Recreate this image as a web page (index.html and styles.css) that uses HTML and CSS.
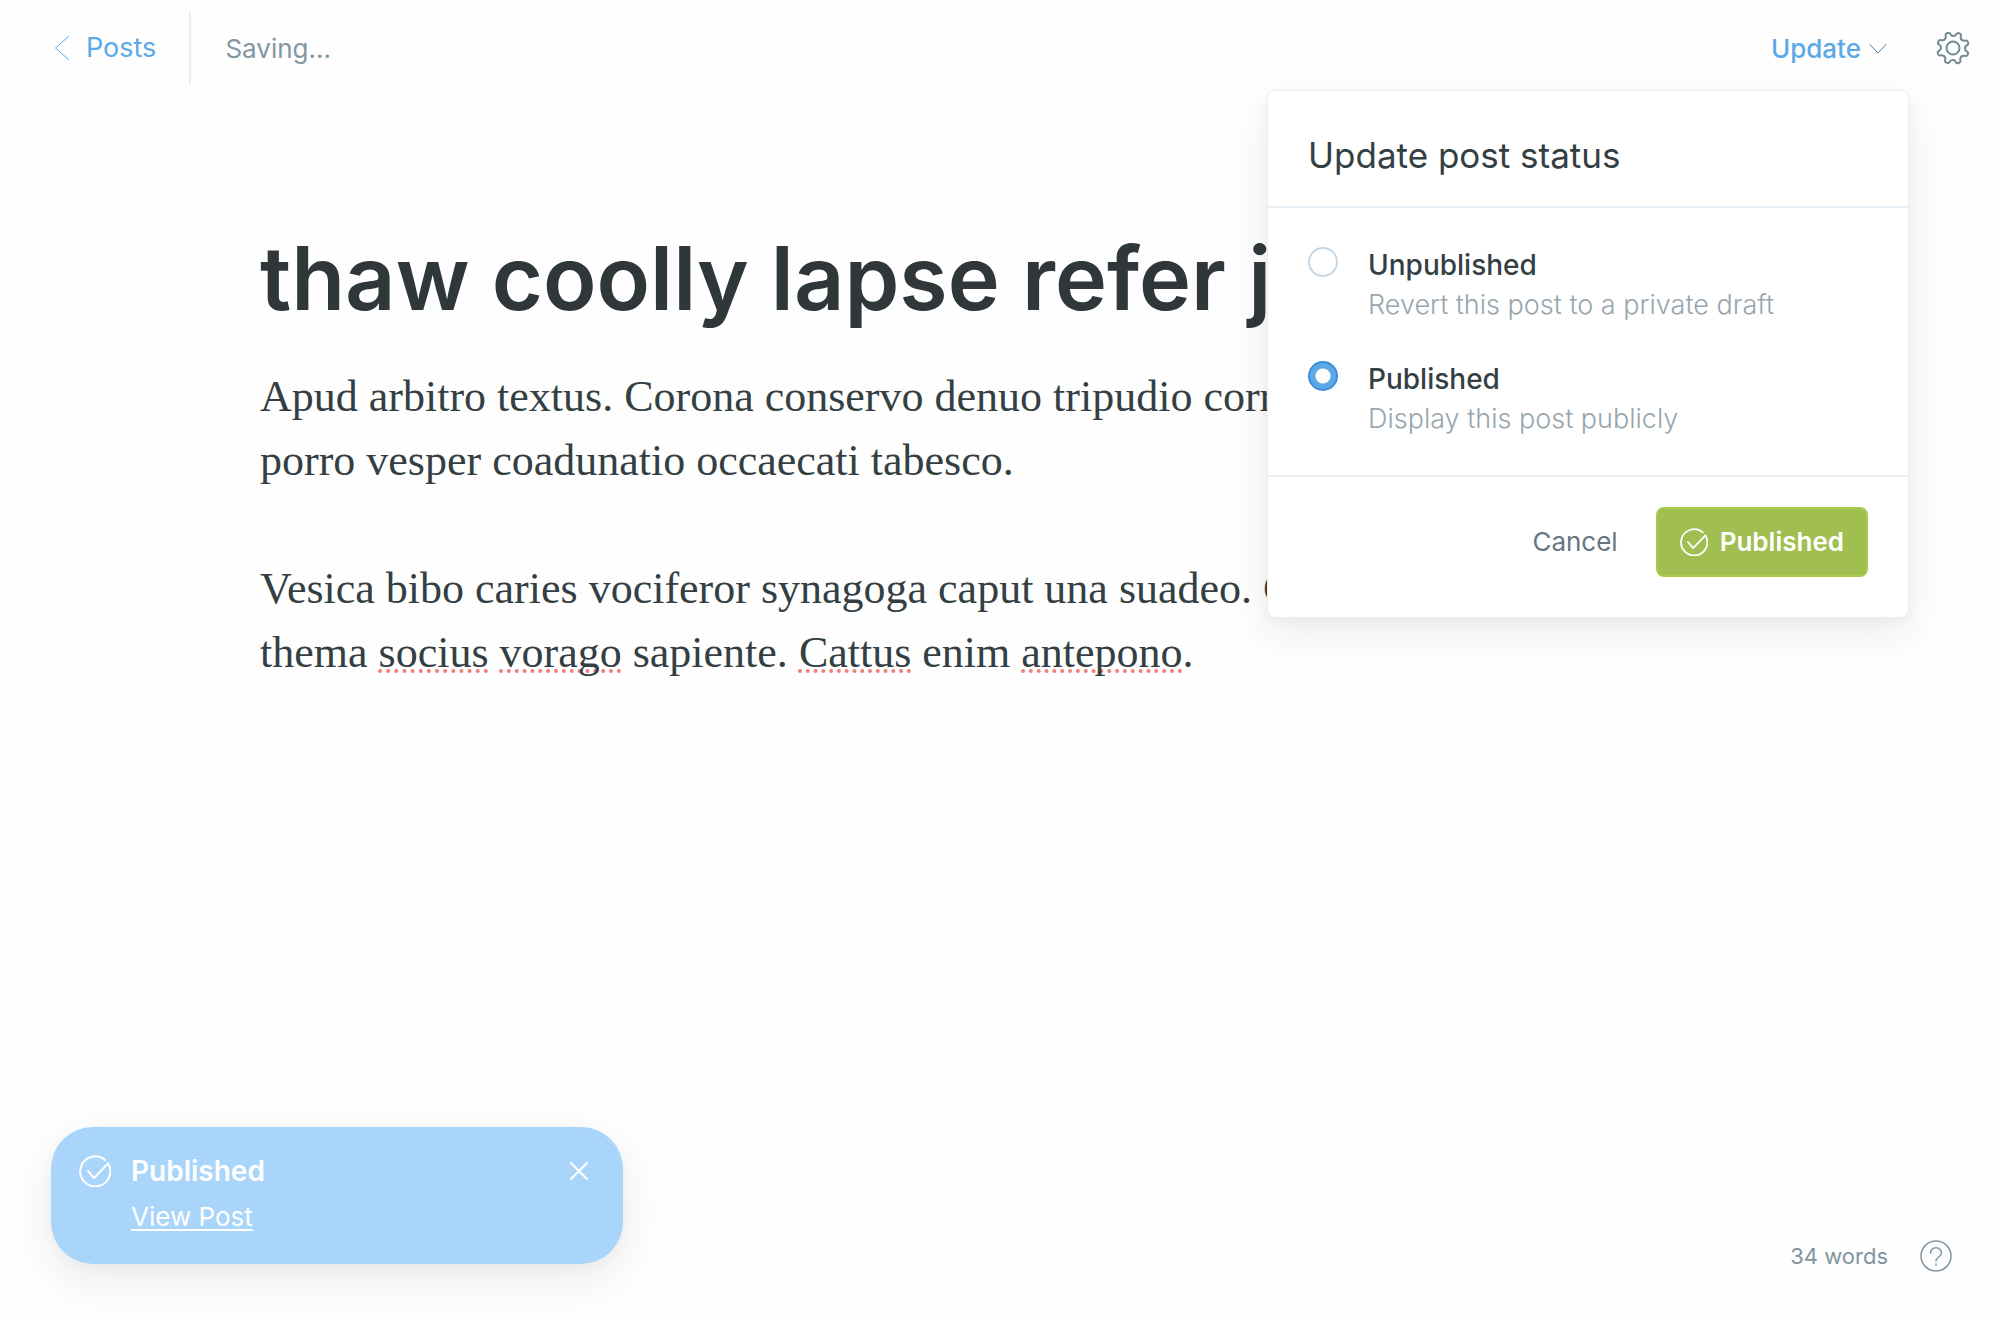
FILE: index.html
```html
<!DOCTYPE html>
<html lang="en">
<head>
<meta charset="utf-8">
<meta name="viewport" content="width=device-width, initial-scale=1">
<title>Edit post</title>
<link rel="stylesheet" href="styles.css">
</head>
<body>
<div class="editor">
  <header class="topbar">
    <a class="back" href="#posts">
      <svg class="back-icon" viewBox="0 0 16 26" aria-hidden="true"><path d="M14.500 1.500L1.500 13l13 11.500"/></svg>
      <span>Posts</span>
    </a>
    <span class="save-state">Saving...</span>
    <div class="publish">
      <button class="update" type="button" aria-expanded="true">Update
        <svg class="update-icon" viewBox="0 0 18 12" aria-hidden="true"><path d="M1 1.500l8 8.500 8-8.500"/></svg>
      </button>
      <form class="menu">
        <h2 class="menu-title">Update post status</h2>
        <div class="menu-options">
          <div class="option">
            <input class="radio" type="radio" name="status" id="unpublished">
            <label class="option-label" for="unpublished">
              <span class="option-name">Unpublished</span>
              <span class="option-note">Revert this post to a private draft</span>
            </label>
          </div>
          <div class="option">
            <input class="radio" type="radio" name="status" id="published" checked>
            <label class="option-label" for="published">
              <span class="option-name">Published</span>
              <span class="option-note">Display this post publicly</span>
            </label>
          </div>
        </div>
        <div class="menu-actions">
          <button class="cancel" type="button">Cancel</button>
          <button class="confirm" type="button">
            <svg class="confirm-icon" viewBox="0 0 32 32" aria-hidden="true"><path d="M9 16l6 7L29 8.500"/><path d="M26 5A15 15 0 1 0 29 8.500"/></svg>
            Published
          </button>
        </div>
      </form>
    </div>
    <button class="settings" type="button" aria-label="Settings">
      <svg class="settings-icon" viewBox="0 0 34 34" aria-hidden="true">
        <circle cx="17" cy="17" r="6.500"/>
        <path id="tooth" d="M17 5C19 5 20 4.200 20.600 3C21.200 1.800 22.300 1.700 23.600 2.300C24.900 2.900 25.300 3.900 24.900 5.200C24.400 6.600 24.500 7.500 25.500 8.500"/>
        <use href="#tooth" transform="rotate(45 17 17)"/>
        <use href="#tooth" transform="rotate(90 17 17)"/>
        <use href="#tooth" transform="rotate(135 17 17)"/>
        <use href="#tooth" transform="rotate(180 17 17)"/>
        <use href="#tooth" transform="rotate(225 17 17)"/>
        <use href="#tooth" transform="rotate(270 17 17)"/>
        <use href="#tooth" transform="rotate(315 17 17)"/>
      </svg>
    </button>
  </header>

  <main class="content">
    <input class="title" type="text" aria-label="Post title" value="thaw coolly lapse refer jaggedly">
    <div class="body" contenteditable="true" spellcheck="false">
      <p>Apud arbitro textus. Corona conservo denuo tripudio corrumpo<br>porro vesper coadunatio occaecati tabesco.</p>
      <p>Vesica bibo caries vociferor synagoga caput una suadeo. Cetera<br>thema <span class="misspelt">socius</span> <span class="misspelt">vorago</span> sapiente. <span class="misspelt">Cattus</span> enim <span class="misspelt">antepono</span>.</p>
    </div>
  </main>

  <footer class="footer">
    <aside class="toast">
      <svg class="toast-icon" viewBox="0 0 32 32" aria-hidden="true"><path d="M9 16l6 7L29 8.500"/><path d="M26 5A15 15 0 1 0 29 8.500"/></svg>
      <div class="toast-text">
        <strong class="toast-title">Published</strong>
        <a class="toast-link" href="#post">View Post</a>
      </div>
      <button class="toast-close" type="button" aria-label="Close">
        <svg viewBox="0 0 18 18" aria-hidden="true"><path d="M1 1l16 16M17 1L1 17"/></svg>
      </button>
    </aside>
    <div class="status">
      <span>34 words</span>
      <a class="help" href="#help" aria-label="Help">
        <svg viewBox="0 0 32 32" aria-hidden="true"><circle cx="16" cy="16" r="15"/><path d="M10.500 13c0-3 2.500-5.300 5.500-5.300s5.500 2.300 5.500 5.300c0 4-5.500 4-5.500 8"/><path d="M16 24v1"/></svg>
      </a>
    </div>
  </footer>
</div>
</body>
</html>
```
FILE: styles.css
```css
* { box-sizing: border-box; }

body {
  margin: 0;
  background: #fefefe;
  color: #343f44;
  font-family: Inter, "Liberation Sans", sans-serif;
  font-size: 26px;
  line-height: 36px;
}

h2, p { margin: 0; }

button {
  padding: 0;
  border: 0;
  background: none;
  color: inherit;
  font: inherit;
  cursor: pointer;
}

svg {
  display: block;
  fill: none;
  stroke: currentColor;
  stroke-width: 2;
  stroke-linecap: round;
  stroke-linejoin: round;
}

.editor {
  display: flex;
  flex-direction: column;
  min-height: 100vh;
}

.topbar {
  display: flex;
  align-items: center;
  height: 96px;
  padding: 0 30px 0 54px;
}

.back {
  display: flex;
  align-items: center;
  gap: 16px;
  height: 72px;
  padding-right: 33px;
  border-right: 2px solid #e5eff5;
  color: #5ba9e6;
  font-size: 27px;
  text-decoration: none;
}

.back-icon {
  width: 16px;
  height: 26px;
  stroke-width: 1;
}

.save-state {
  padding: 2px 0 0 34px;
  color: #8496a2;
}

.publish {
  position: relative;
  margin-left: auto;
}

.update {
  display: flex;
  align-items: center;
  gap: 8px;
  padding-top: 2px;
  color: #5ba9e6;
  font-weight: 500;
}

.update-icon {
  width: 18px;
  height: 12px;
  color: #4d7ea5;
  stroke-width: 1;
}

.settings {
  margin-left: 49px;
  color: #738a94;
}

.settings-icon {
  width: 34px;
  height: 34px;
}

.menu {
  position: absolute;
  top: 61px;
  right: -22px;
  z-index: 2;
  width: 642px;
  border: 1px solid #eceef0;
  border-radius: 8px;
  background: #fff;
  box-shadow: 0 16px 40px rgba(39, 44, 49, 0.08), 0 4px 12px rgba(39, 44, 49, 0.04);
}

.menu-title {
  padding: 43px 40px 30px;
  border-bottom: 2px solid #e5eff5;
  font-size: 35px;
  font-weight: 400;
  line-height: 42px;
}

.menu-options {
  display: grid;
  gap: 38px;
  padding: 39px 40px 38px;
  border-bottom: 2px solid #e5eff5;
}

.option {
  display: flex;
  align-items: flex-start;
  gap: 30px;
}

.radio {
  width: 30px;
  height: 30px;
  margin: 0;
  border: 2px solid #c5d7e5;
  border-radius: 50%;
  background: #fff;
  appearance: none;
}

.radio:checked {
  border-color: #3f8fd6;
  background: radial-gradient(circle, #fff 7px, #5ba9e6 8px);
}

.option-label { display: grid; gap: 4px; }

.option-name {
  font-size: 28px;
  font-weight: 500;
}

.option-note {
  color: #98a6ae;
  font-size: 27px;
  font-weight: 300;
}

.menu-actions {
  display: flex;
  justify-content: flex-end;
  align-items: center;
  gap: 38px;
  padding: 30px 40px 40px;
}

.cancel { color: #667780; }

.confirm {
  display: flex;
  align-items: center;
  gap: 12px;
  height: 70px;
  padding: 0 22px;
  border: 2px solid #a8cb4c;
  border-radius: 8px;
  background: #a1be51;
  color: #fff;
  font-weight: 600;
}

.confirm-icon {
  width: 28px;
  height: 28px;
}

.content {
  flex: 1;
  padding: 126px 260px 0;
}

.title {
  display: block;
  width: 100%;
  height: 112px;
  padding: 0;
  border: 0;
  outline: 0;
  background: none;
  color: #2f373b;
  font: 600 88px/112px Inter, "Liberation Sans", sans-serif;
}

.body {
  display: grid;
  gap: 64px;
  margin-top: 31px;
  outline: 0;
  font-family: Georgia, "Liberation Serif", serif;
  font-size: 44px;
  line-height: 64px;
  white-space: nowrap;
}

.misspelt {
  text-decoration: underline dotted #f07f78 4px;
  text-decoration-skip-ink: none;
  text-underline-offset: 2px;
}

.footer {
  display: flex;
  justify-content: space-between;
  align-items: flex-end;
  padding: 0 48px 56px 51px;
}

.toast {
  display: flex;
  align-items: flex-start;
  gap: 20px;
  width: 572px;
  padding: 26px 35px 29px 28px;
  border-radius: 42px;
  background: #a9d5fa;
  box-shadow: 0 16px 48px rgba(0, 0, 0, 0.08), 0 4px 12px rgba(0, 0, 0, 0.03);
  color: #fff;
}

.toast-icon {
  width: 32px;
  height: 32px;
  margin-top: 2px;
}

.toast-text {
  display: grid;
  flex: 1;
  gap: 10px;
  justify-items: start;
}

.toast-title {
  font-size: 28px;
  font-weight: 600;
}

.toast-link {
  color: inherit;
  text-decoration-thickness: 2px;
  text-underline-offset: 3px;
}

.toast-close svg {
  width: 18px;
  height: 18px;
  margin-top: 9px;
}

.status {
  display: flex;
  align-items: center;
  gap: 32px;
  margin-bottom: -10px;
  color: #7f94a0;
  font-size: 22px;
}

.help { color: inherit; }

.help svg {
  width: 32px;
  height: 32px;
  stroke-width: 1.500;
}
```
